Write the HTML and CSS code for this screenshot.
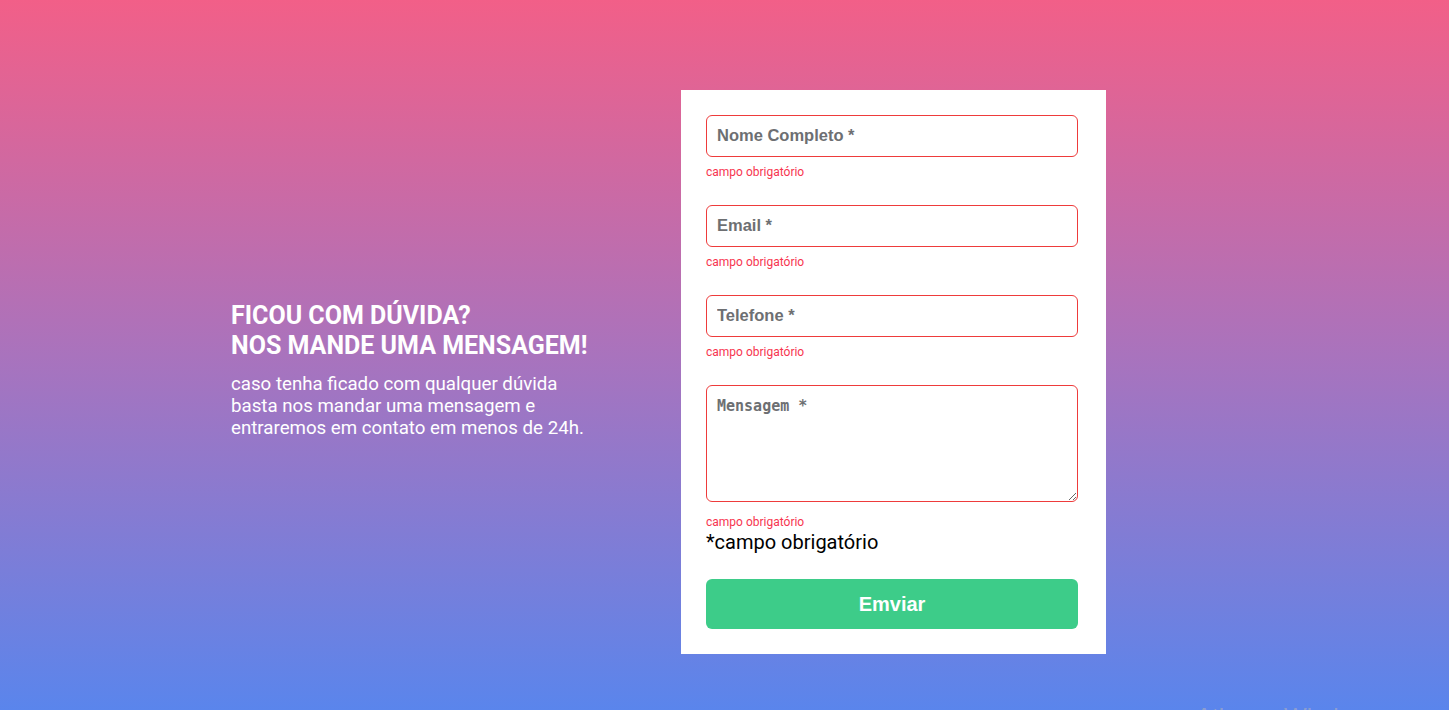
FILE: index.html
```html
<!DOCTYPE html>
<html lang="pt-BR">
<head>
<meta charset="utf-8">
<title>Contato</title>
<link rel="stylesheet" href="styles.css">
</head>
<body>
<main class="page">
  <section class="intro">
    <h1 class="intro-title">FICOU COM DÚVIDA?<br>NOS MANDE UMA MENSAGEM!</h1>
    <p class="intro-text">caso tenha ficado com qualquer dúvida basta nos mandar uma mensagem e entraremos em contato em menos de 24h.</p>
  </section>
  <form class="card">
    <div class="field">
      <input class="input" type="text" placeholder="Nome Completo *">
      <span class="error">campo obrigatório</span>
    </div>
    <div class="field">
      <input class="input" type="email" placeholder="Email *">
      <span class="error">campo obrigatório</span>
    </div>
    <div class="field">
      <input class="input" type="tel" placeholder="Telefone *">
      <span class="error">campo obrigatório</span>
    </div>
    <div class="field field-last">
      <textarea class="textarea" placeholder="Mensagem *"></textarea>
      <span class="error error-area">campo obrigatório</span>
    </div>
    <p class="note">*campo obrigatório</p>
    <button class="submit" type="button">Emviar</button>
  </form>
</main>
<div class="watermark">Ativar o Windows</div>
</body>
</html>
```
FILE: styles.css
```css
html, body {
  margin: 0;
  height: 100%;
}
body {
  background: linear-gradient(180deg, #f25f88 0%, #a973bd 50%, #5a85ec 100%);
  font-family: Roboto, "Liberation Sans", sans-serif;
  overflow: hidden;
  position: relative;
}
.page {
  display: flex;
  align-items: center;
  padding: 90px 0 0 231px;
  gap: 88px;
}
.intro {
  width: 362px;
  color: #fff;
  margin-bottom: 4px;
}
.intro-title {
  margin: 0;
  font-family: Roboto, sans-serif;
  font-weight: 700;
  font-size: 25px;
  line-height: 30px;
}
.intro-text {
  margin: 12px 0 0;
  font-size: 18.7px;
  line-height: 22px;
}
.card {
  width: 425px;
  box-sizing: border-box;
  background: #fff;
  padding: 25px 28px 25px 25px;
  display: flex;
  flex-direction: column;
}
.field {
  display: flex;
  flex-direction: column;
  margin-bottom: 26px;
}
.field-last {
  margin-bottom: 0;
}
.input {
  box-sizing: border-box;
  width: 372px;
  height: 42px;
  border: 1px solid #ee3b3b;
  border-radius: 6px;
  padding: 0 10px 1px;
  font-family: "Liberation Sans", Arial, sans-serif;
  font-weight: 700;
  font-size: 16.5px;
  outline: none;
}
.input::placeholder,
.textarea::placeholder {
  color: #6d6f72;
  opacity: 1;
}
.textarea {
  box-sizing: border-box;
  display: block;
  width: 372px;
  height: 117px;
  border: 1px solid #ee3b3b;
  border-radius: 6px;
  padding: 11px 10px;
  font-family: "DejaVu Sans Mono", monospace;
  font-weight: 700;
  font-size: 15px;
  resize: both;
  outline: none;
}
.error {
  margin-top: 8px;
  font-size: 12px;
  line-height: 14px;
  color: #f7354f;
}
.error-area {
  margin-top: 13px;
}
.note {
  margin: 2px 0 0;
  font-size: 20px;
  line-height: 23px;
  color: #000;
}
.submit {
  margin-top: 25px;
  width: 372px;
  height: 50px;
  border: none;
  border-radius: 6px;
  background: #3dcc89;
  color: #fff;
  font-family: "Liberation Sans", Arial, sans-serif;
  font-weight: 700;
  font-size: 20px;
  cursor: pointer;
}
.watermark {
  position: absolute;
  left: 1196px;
  top: 703px;
  font-family: "Liberation Sans", sans-serif;
  font-size: 24px;
  line-height: 28px;
  color: rgba(175, 175, 190, 0.6);
  white-space: nowrap;
}
```
